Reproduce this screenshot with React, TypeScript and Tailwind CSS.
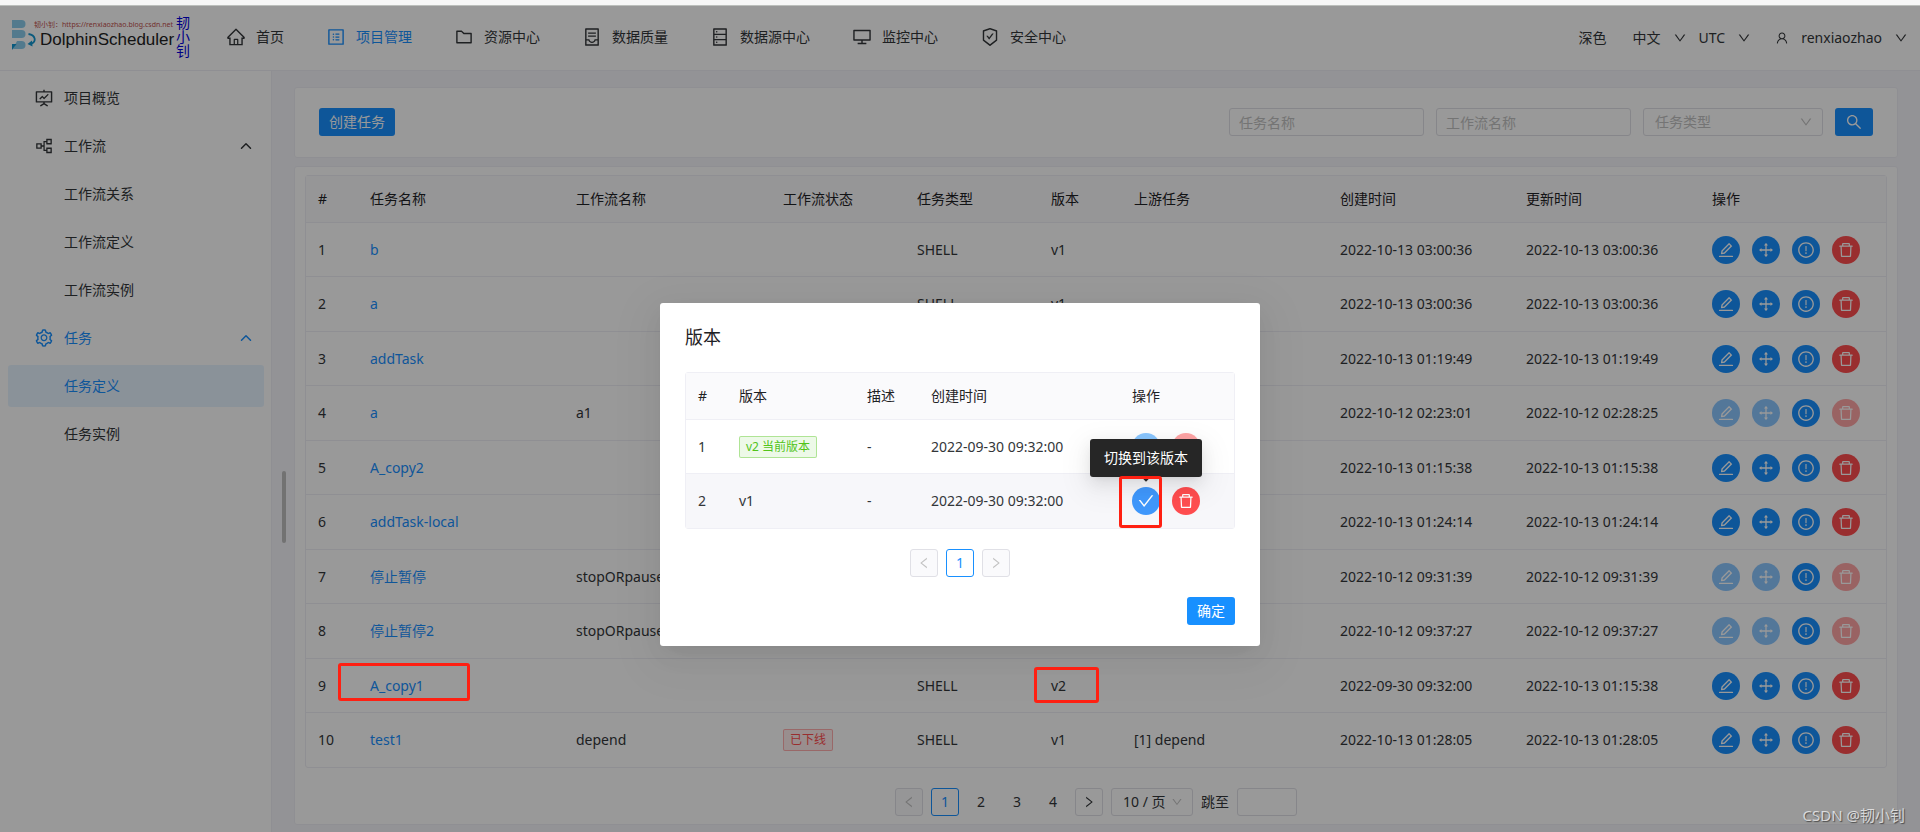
import type { ReactNode } from "react";
import type { IconType } from "react-icons";
import {
  AiOutlineCheck,
  AiOutlineContainer,
  AiOutlineDatabase,
  AiOutlineDelete,
  AiOutlineDesktop,
  AiOutlineDown,
  AiOutlineDrag,
  AiOutlineEdit,
  AiOutlineExclamationCircle,
  AiOutlineFolder,
  AiOutlineFundProjectionScreen,
  AiOutlineHome,
  AiOutlineLeft,
  AiOutlinePartition,
  AiOutlineProfile,
  AiOutlineRight,
  AiOutlineSafetyCertificate,
  AiOutlineSearch,
  AiOutlineSetting,
  AiOutlineUser,
} from "react-icons/ai";
import { ChevronUp } from "lucide-react";

type Task = {
  id: number;
  name: string;
  workflow?: string;
  offline?: boolean;
  version: string;
  upstream?: string;
  created: string;
  updated: string;
  locked?: boolean;
  marked?: boolean;
};

const navItems: { label: string; icon: IconType; active?: boolean }[] = [
  { label: "首页", icon: AiOutlineHome },
  { label: "项目管理", icon: AiOutlineProfile, active: true },
  { label: "资源中心", icon: AiOutlineFolder },
  { label: "数据质量", icon: AiOutlineContainer },
  { label: "数据源中心", icon: AiOutlineDatabase },
  { label: "监控中心", icon: AiOutlineDesktop },
  { label: "安全中心", icon: AiOutlineSafetyCertificate },
];

const tasks: Task[] = [
  { id: 1, name: "b", version: "v1", created: "2022-10-13 03:00:36", updated: "2022-10-13 03:00:36" },
  { id: 2, name: "a", version: "v1", created: "2022-10-13 03:00:36", updated: "2022-10-13 03:00:36" },
  { id: 3, name: "addTask", version: "v1", created: "2022-10-13 01:19:49", updated: "2022-10-13 01:19:49" },
  { id: 4, name: "a", workflow: "a1", version: "v1", created: "2022-10-12 02:23:01", updated: "2022-10-12 02:28:25", locked: true },
  { id: 5, name: "A_copy2", version: "v1", created: "2022-10-13 01:15:38", updated: "2022-10-13 01:15:38" },
  { id: 6, name: "addTask-local", version: "v1", created: "2022-10-13 01:24:14", updated: "2022-10-13 01:24:14" },
  { id: 7, name: "停止暂停", workflow: "stopORpause", version: "v1", created: "2022-10-12 09:31:39", updated: "2022-10-12 09:31:39", locked: true },
  { id: 8, name: "停止暂停2", workflow: "stopORpause", version: "v1", created: "2022-10-12 09:37:27", updated: "2022-10-12 09:37:27", locked: true },
  { id: 9, name: "A_copy1", version: "v2", created: "2022-09-30 09:32:00", updated: "2022-10-13 01:15:38", marked: true },
  { id: 10, name: "test1", workflow: "depend", offline: true, version: "v1", upstream: "[1] depend", created: "2022-10-13 01:28:05", updated: "2022-10-13 01:28:05" },
];

const taskColumns = [
  { title: "#", width: "w-[52px]" },
  { title: "任务名称", width: "w-[206px]" },
  { title: "工作流名称", width: "w-[207px]" },
  { title: "工作流状态", width: "w-[134px]" },
  { title: "任务类型", width: "w-[134px]" },
  { title: "版本", width: "w-[83px]" },
  { title: "上游任务", width: "w-[206px]" },
  { title: "创建时间", width: "w-[186px]" },
  { title: "更新时间", width: "w-[186px]" },
  { title: "操作", width: "w-[186px]" },
];

const versionColumns = [
  { title: "#", width: "w-[41px]" },
  { title: "版本", width: "w-[128px]" },
  { title: "描述", width: "w-[64px]" },
  { title: "创建时间", width: "w-[201px]" },
  { title: "操作", width: "w-[114px]" },
];

function Logo() {
  return (
    <a href="#" aria-label="DolphinScheduler" className="flex items-center pb-1.5 pl-3">
      <svg width="22" height="30" viewBox="0 0 22 30" className="overflow-visible" aria-hidden="true">
        <path d="M0 0h9.500a4 4 0 0 1 0 8H0z" fill="#8accec" />
        <path d="M0 10h9.500a4 4 0 0 1 0 8H0z" fill="#8accec" />
        <path d="M5 21h4.500a4 4 0 0 1 0 8H1z" fill="#8accec" />
        <path d="M0 24h4.500L0 30z" fill="#1296d0" />
        <path d="M16.500 14c7 1.200 8.500 7.500 2.500 10" fill="none" stroke="#1296d0" strokeWidth="1.800" />
        <path d="M20 20.500l-4.500 3.500 5 2.500z" fill="#1296d0" />
      </svg>
      <span className="flex w-[142px] flex-col">
        <span className="text-[7px] leading-[10px] whitespace-nowrap text-[#c0504d]">
          韧小钊：https://renxiaozhao.blog.csdn.net
        </span>
        <span className="pl-1.5 font-['Liberation_Sans',sans-serif] text-[17px] leading-5 text-[#222]">
          DolphinScheduler
        </span>
      </span>
      <span className="w-[14px] pt-1 text-[14px] leading-[14px] break-all text-[#0000e0]">韧小钊</span>
    </a>
  );
}

function RoundButton({
  icon: Icon,
  label,
  color = "bg-[#1890ff]",
  disabled,
}: {
  icon: IconType;
  label: string;
  color?: string;
  disabled?: boolean;
}) {
  return (
    <button
      type="button"
      aria-label={label}
      disabled={disabled}
      className={`flex size-7 items-center justify-center rounded-full text-white disabled:opacity-50 ${color}`}
    >
      <Icon size={18} />
    </button>
  );
}

function PageButton({
  children,
  label,
  variant = "plain",
}: {
  children: ReactNode;
  label: string;
  variant?: "plain" | "outlined" | "current" | "disabled";
}) {
  const looks = {
    plain: "border-transparent",
    outlined: "border-[#e0e0e6]",
    current: "border-[#1890ff] text-[#1890ff]",
    disabled: "border-[#e0e0e6] bg-[#fafafc] text-[#c2c2c2]",
  };
  return (
    <button
      type="button"
      aria-label={label}
      disabled={variant === "disabled"}
      className={`flex size-7 items-center justify-center rounded-[3px] border ${looks[variant]}`}
    >
      {children}
    </button>
  );
}

function SideItem({ label, icon: Icon, active, selected, open }: {
  label: string;
  icon?: IconType;
  active?: boolean;
  selected?: boolean;
  open?: boolean;
}) {
  return (
    <a
      href="#"
      className={`mt-1.5 mr-[7px] ml-2 flex h-[42px] items-center rounded-[3px] pr-[9px] pl-6 ${
        active || selected ? "text-[#1890ff]" : ""
      } ${selected ? "bg-[#1890ff]/10" : ""}`}
    >
      <span className="mr-2 flex w-6 justify-center">{Icon && <Icon size={20} />}</span>
      <span className="flex-1">{label}</span>
      {open && <ChevronUp size={18} strokeWidth={2} />}
    </a>
  );
}

function Mark({ place }: { place: string }) {
  return (
    <span
      aria-hidden="true"
      className={`pointer-events-none absolute z-20 rounded-[3px] border-3 border-[#ff2012] ${place}`}
    />
  );
}

function HeadRow({ columns }: { columns: { title: string; width: string }[] }) {
  return (
    <tr className="h-[47px] bg-[#fafafc] text-[#1f2225]">
      {columns.map((c) => (
        <th key={c.title} className={`border-b border-[#efeff5] px-3 font-normal ${c.width}`}>
          {c.title}
        </th>
      ))}
    </tr>
  );
}

function TaskTable() {
  return (
    <div className="rounded-[3px] border border-[#efeff5]">
      <table className="w-full table-fixed border-separate border-spacing-0 text-left">
        <thead>
          <HeadRow columns={taskColumns} />
        </thead>
        <tbody>
          {tasks.map((t) => (
            <tr
              key={t.id}
              className="h-[54px] not-last:even:h-[55px] *:border-[#efeff5] *:px-3 not-last:*:border-b"
            >
              <td>{t.id}</td>
              <td className="relative">
                <a href="#" className="text-[#1890ff]">
                  {t.name}
                </a>
                {t.marked && <Mark place="top-1 -left-5 h-[38px] w-[132px]" />}
              </td>
              <td>{t.workflow}</td>
              <td>
                {t.offline && (
                  <span className="flex h-[22px] w-fit items-center rounded-xs border border-[#ff4d4f]/40 bg-[#ff4d4f]/10 px-1.5 text-xs text-[#ff4d4f]">
                    已下线
                  </span>
                )}
              </td>
              <td>SHELL</td>
              <td className="relative">
                {t.version}
                {t.marked && <Mark place="top-2 -left-[5px] h-9 w-[65px]" />}
              </td>
              <td>{t.upstream}</td>
              <td className="whitespace-nowrap">{t.created}</td>
              <td className="whitespace-nowrap">{t.updated}</td>
              <td>
                <div className="flex gap-3">
                  <RoundButton icon={AiOutlineEdit} label="编辑" disabled={t.locked} />
                  <RoundButton icon={AiOutlineDrag} label="移动" disabled={t.locked} />
                  <RoundButton icon={AiOutlineExclamationCircle} label="版本" />
                  <RoundButton icon={AiOutlineDelete} label="删除" color="bg-[#ff4d4f]" disabled={t.locked} />
                </div>
              </td>
            </tr>
          ))}
        </tbody>
      </table>
    </div>
  );
}

function VersionDialog() {
  return (
    <div
      role="dialog"
      aria-labelledby="version-title"
      className="w-[600px] rounded-[3px] bg-white px-[25px] pt-5 pb-[21px] shadow-[0_6px_16px_-9px_rgba(0,0,0,0.08),0_9px_28px_0_rgba(0,0,0,0.05),0_12px_48px_16px_rgba(0,0,0,0.03)]"
    >
      <h2 id="version-title" className="mb-[21px] text-lg leading-7 text-[#1f2225]">
        版本
      </h2>
      <div className="rounded-[3px] border border-[#efeff5]">
        <table className="w-full table-fixed border-separate border-spacing-0 text-left">
          <thead>
            <HeadRow columns={versionColumns} />
          </thead>
          <tbody>
            <tr className="h-[54px] *:border-b *:border-[#efeff5] *:px-3">
              <td>1</td>
              <td>
                <span className="flex h-[22px] w-fit items-center rounded-xs border border-[#52c41a]/40 bg-[#52c41a]/10 px-1.5 text-xs whitespace-nowrap text-[#52c41a]">
                  v2 当前版本
                </span>
              </td>
              <td>-</td>
              <td>2022-09-30 09:32:00</td>
              <td>
                <div className="flex gap-3">
                  <RoundButton icon={AiOutlineCheck} label="切换到该版本" disabled />
                  <RoundButton icon={AiOutlineDelete} label="删除" color="bg-[#ff4d4f]" disabled />
                </div>
              </td>
            </tr>
            <tr className="h-[54px] bg-[#f7f7fa] *:px-3">
              <td>2</td>
              <td>v1</td>
              <td>-</td>
              <td>2022-09-30 09:32:00</td>
              <td>
                <div className="relative flex gap-3">
                  <RoundButton icon={AiOutlineCheck} label="切换到该版本" color="bg-[#4098fc]" />
                  <RoundButton icon={AiOutlineDelete} label="删除" color="bg-[#ff4d4f]" />
                  <div
                    role="tooltip"
                    className="absolute bottom-[38px] -left-[42px] flex h-[38px] w-28 items-center justify-center rounded-[3px] bg-[#262626] whitespace-nowrap text-white shadow-[0_3px_6px_-4px_rgba(0,0,0,0.12),0_6px_16px_0_rgba(0,0,0,0.08),0_9px_28px_8px_rgba(0,0,0,0.05)]"
                  >
                    切换到该版本
                    <span className="absolute top-[33px] left-[52px] size-2 rotate-45 bg-[#262626]" />
                  </div>
                  <Mark place="-top-[11px] -left-[13px] h-[52px] w-[43px]" />
                </div>
              </td>
            </tr>
          </tbody>
        </table>
      </div>
      <nav aria-label="版本分页" className="mt-5 flex justify-center gap-2">
        <PageButton label="上一页" variant="disabled">
          <AiOutlineLeft size={14} />
        </PageButton>
        <PageButton label="第 1 页" variant="current">
          1
        </PageButton>
        <PageButton label="下一页" variant="disabled">
          <AiOutlineRight size={14} />
        </PageButton>
      </nav>
      <div className="mt-5 flex justify-end">
        <button type="button" className="h-7 rounded-[3px] bg-[#1890ff] px-2.5 text-white">
          确定
        </button>
      </div>
    </div>
  );
}

export default function App() {
  return (
    <div className="flex min-h-screen flex-col font-['Noto_Sans','Noto_Sans_CJK_SC',sans-serif] text-sm text-[#333639]">
      <div className="h-1.5 border-b border-[#bcbfbc] bg-[#f7f7f7]" />
      <div className="relative flex flex-1 flex-col bg-[#f6f6fb]">
        <header className="flex h-[65px] items-center border-b border-[#efeff5] bg-white">
          <Logo />
          <nav className="ml-3.5 flex flex-1 pb-0.5">
            {navItems.map(({ label, icon: Icon, active }) => (
              <a
                key={label}
                href="#"
                className={`flex items-center px-5 whitespace-nowrap ${active ? "text-[#1890ff]" : ""}`}
              >
                <span className="mr-2 flex w-6 justify-center">
                  <Icon size={20} />
                </span>
                {label}
              </a>
            ))}
          </nav>
          <div className="flex items-center pr-3">
            <button type="button" className="mr-[26px]">
              深色
            </button>
            <button type="button" className="mr-3 flex items-center gap-3">
              中文
              <AiOutlineDown size={14} />
            </button>
            <button type="button" className="mr-6 flex items-center gap-3">
              UTC
              <AiOutlineDown size={14} />
            </button>
            <button type="button" className="flex items-center gap-3">
              <AiOutlineUser size={14} />
              renxiaozhao
              <AiOutlineDown size={14} />
            </button>
          </div>
        </header>

        <div className="flex flex-1">
          <aside className="relative w-[272px] shrink-0 border-r border-[#efeff5] bg-white">
            <SideItem label="项目概览" icon={AiOutlineFundProjectionScreen} />
            <SideItem label="工作流" icon={AiOutlinePartition} open />
            <SideItem label="工作流关系" />
            <SideItem label="工作流定义" />
            <SideItem label="工作流实例" />
            <SideItem label="任务" icon={AiOutlineSetting} active open />
            <SideItem label="任务定义" selected />
            <SideItem label="任务实例" />
            <button
              type="button"
              aria-label="收起侧栏"
              className="absolute top-[400px] -right-[15px] h-[72px] w-1 rounded-sm bg-[#bfbfbf]"
            />
          </aside>

          <main className="flex min-w-0 flex-1 flex-col gap-2 px-[22px] pt-4 pb-2">
            <section className="flex items-center justify-between rounded-[3px] border border-[#efeff5] bg-white px-6 pt-5 pb-[21px]">
              <button type="button" className="h-7 rounded-[3px] bg-[#1890ff] px-2.5 text-white">
                创建任务
              </button>
              <form className="flex gap-3">
                <input
                  type="text"
                  aria-label="任务名称"
                  placeholder="任务名称"
                  className="h-7 w-[195px] rounded-[3px] border border-[#e0e0e6] px-[9px] placeholder:text-[#c2c2c2]"
                />
                <input
                  type="text"
                  aria-label="工作流名称"
                  placeholder="工作流名称"
                  className="h-7 w-[195px] rounded-[3px] border border-[#e0e0e6] px-[9px] placeholder:text-[#c2c2c2]"
                />
                <div className="relative">
                  <select
                    aria-label="任务类型"
                    className="h-7 w-[180px] appearance-none rounded-[3px] border border-[#e0e0e6] px-[11px] text-[#c2c2c2]"
                  >
                    <option>任务类型</option>
                  </select>
                  <AiOutlineDown
                    size={14}
                    className="pointer-events-none absolute top-[7px] right-2.5 text-[#c2c2c2]"
                  />
                </div>
                <button
                  type="button"
                  aria-label="搜索"
                  className="flex h-7 items-center rounded-[3px] bg-[#1890ff] px-2.5 text-white"
                >
                  <AiOutlineSearch size={18} />
                </button>
              </form>
            </section>

            <section className="rounded-[3px] border border-[#efeff5] bg-white px-2.5 py-2">
              <TaskTable />
              <nav aria-label="分页" className="mt-5 flex items-center justify-center gap-2">
                <PageButton label="上一页" variant="disabled">
                  <AiOutlineLeft size={14} />
                </PageButton>
                <PageButton label="第 1 页" variant="current">
                  1
                </PageButton>
                <PageButton label="第 2 页">2</PageButton>
                <PageButton label="第 3 页">3</PageButton>
                <PageButton label="第 4 页">4</PageButton>
                <PageButton label="下一页" variant="outlined">
                  <AiOutlineRight size={14} />
                </PageButton>
                <div className="relative">
                  <select
                    aria-label="每页条数"
                    className="h-7 w-[82px] appearance-none rounded-[3px] border border-[#e0e0e6] pl-[11px]"
                  >
                    <option>10 / 页</option>
                  </select>
                  <AiOutlineDown
                    size={12}
                    className="pointer-events-none absolute top-2 right-2.5 text-[#c2c2c2]"
                  />
                </div>
                <label htmlFor="jump">跳至</label>
                <input
                  id="jump"
                  type="text"
                  className="h-7 w-[60px] rounded-[3px] border border-[#e0e0e6] px-2"
                />
              </nav>
            </section>
          </main>
        </div>

        <div className="absolute inset-0 z-10 flex items-start justify-center bg-black/40 pt-[297px]">
          <VersionDialog />
        </div>
        <p className="absolute right-[15px] bottom-1.5 z-20 text-[15px] leading-6 text-white/70 [text-shadow:1px_1px_1px_rgba(0,0,0,0.5)]">
          CSDN @韧小钊
        </p>
      </div>
    </div>
  );
}
